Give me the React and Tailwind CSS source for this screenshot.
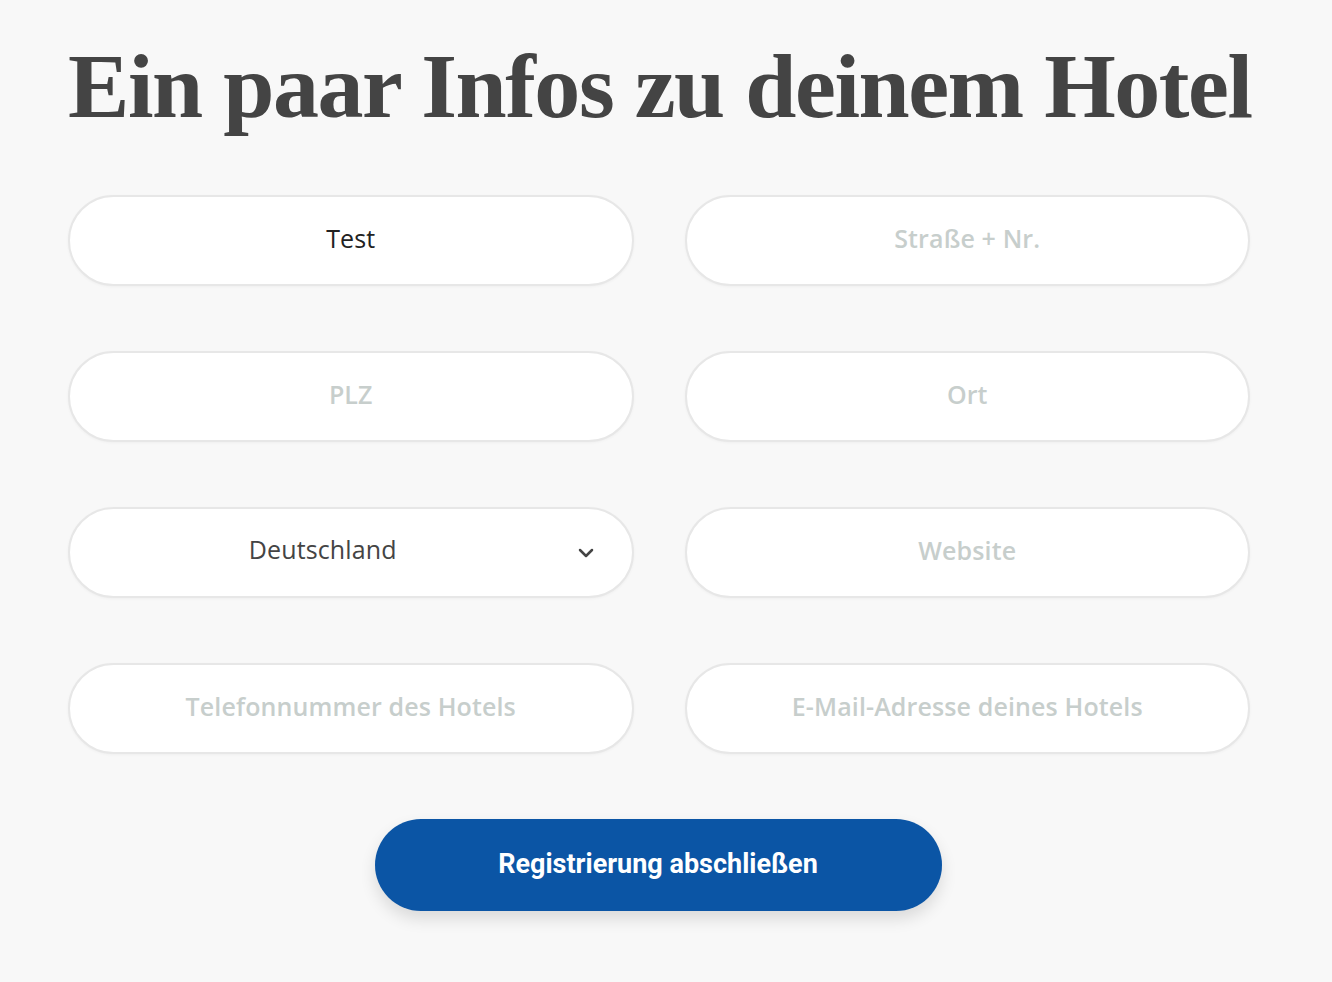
import { ChevronDown } from 'lucide-react';

const fields = [
  { name: 'name', placeholder: 'Hotelname', value: 'Test' },
  { name: 'street', placeholder: 'Straße + Nr.' },
  { name: 'zip', placeholder: 'PLZ' },
  { name: 'city', placeholder: 'Ort' },
  { name: 'country', select: true },
  { name: 'website', placeholder: 'Website' },
  { name: 'phone', placeholder: 'Telefonnummer des Hotels' },
  { name: 'email', placeholder: 'E-Mail-Adresse deines Hotels' },
];

const fieldClass =
  "h-[91px] w-full rounded-full border-2 border-[#e7e7e7] bg-white px-10 pb-[5px] text-center font-['Open_Sans',sans-serif] text-[25px] font-medium tracking-[0.005em] text-[#222] shadow-[0_1px_3px_rgba(0,0,0,0.04)] outline-none placeholder:font-semibold placeholder:text-[#c7cecc]";

function Field({ field }) {
  if (field.select) {
    return (
      <div className="relative">
        <select
          defaultValue="DE"
          className={`${fieldClass} appearance-none pr-24 text-[#444]`}
          style={{ textAlignLast: 'center' }}
        >
          <option value="DE">Deutschland</option>
          <option value="AT">Österreich</option>
          <option value="CH">Schweiz</option>
        </select>
        <ChevronDown
          className="pointer-events-none absolute right-[36px] top-1/2 h-6 w-6 -translate-y-1/2 text-[#444]"
          strokeWidth={2.5}
        />
      </div>
    );
  }
  return (
    <input
      type="text"
      name={field.name}
      defaultValue={field.value}
      placeholder={field.placeholder}
      className={fieldClass}
    />
  );
}

export default function App() {
  return (
    <div className="min-h-[982px] w-full bg-[#f8f8f8] font-['Roboto',sans-serif]">
      <div className="ml-[68px] w-[1182px] pt-[26px]">
        <h1 className="whitespace-nowrap font-['Liberation_Serif',serif] text-[92px] font-bold leading-[120px] tracking-[-0.016em] text-[#444]">
          Ein paar Infos zu deinem Hotel
        </h1>

        <form className="mt-[49px]" onSubmit={(e) => e.preventDefault()}>
          <div className="grid grid-cols-2 gap-x-[51px] gap-y-[65px]">
            {fields.map((f) => (
              <Field key={f.name} field={f} />
            ))}
          </div>

          <div className="mt-[65px] flex justify-center pr-[2px]">
            <button
              type="submit"
              className="h-[92px] w-[567px] rounded-full bg-[#0b55a5] pb-[2px] text-[27px] font-bold text-white shadow-[0_8px_16px_rgba(0,0,0,0.12)]"
            >
              Registrierung abschließen
            </button>
          </div>
        </form>
      </div>
    </div>
  );
}
